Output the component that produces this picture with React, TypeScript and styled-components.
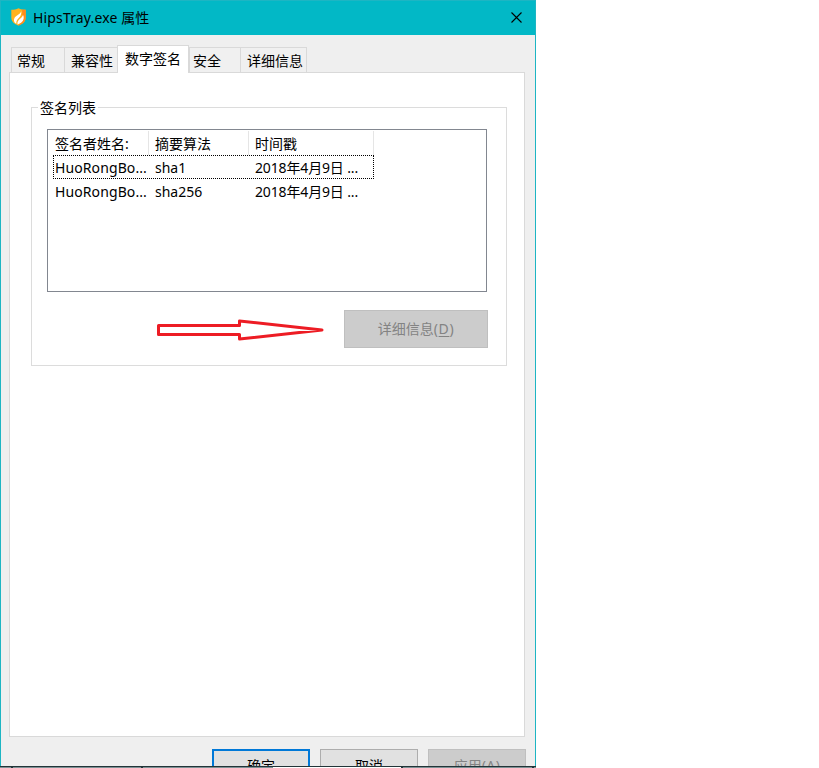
import React from "react";
import styled, { createGlobalStyle } from "styled-components";

const Global = createGlobalStyle`
  * { box-sizing: border-box; }
  html, body { margin: 0; padding: 0; background: #fff; overflow: hidden; }
  body {
    font-family: "Noto Sans", "Noto Sans CJK SC", sans-serif;
    font-size: 14px;
    line-height: 20px;
    color: #000;
    white-space: nowrap;
  }
`;

const Page = styled.div`
  width: 819px;
  height: 768px;
  overflow: hidden;
`;

const Dialog = styled.div`
  width: 536px;
  height: 766px;
  display: flex;
  flex-direction: column;
  background: #efefef;
  border: 1px solid #1db5c3;
  border-bottom: 0;
  overflow: hidden;
`;

const TitleBar = styled.header`
  height: 34px;
  flex: none;
  display: flex;
  align-items: center;
  padding: 0 13px 0 10px;
  background: #02b8c6;
`;

const Title = styled.div`
  flex: 1;
  padding-left: 7px;
`;

const Latin = styled.span<{ $spacing?: number }>`
  letter-spacing: ${(p) => p.$spacing ?? 0}px;
`;

const TabStrip = styled.nav`
  height: 37px;
  flex: none;
  display: flex;
  align-items: flex-end;
  padding-left: 10px;
`;

const Tab = styled.div<{ $width: number; $inset: number; $active?: boolean }>`
  width: ${(p) => p.$width}px;
  height: ${(p) => (p.$active ? 28 : 25)}px;
  margin-bottom: ${(p) => (p.$active ? -1 : 0)}px;
  padding: 3px 0 0 ${(p) => p.$inset}px;
  border: 1px solid #d9d9d9;
  border-width: ${(p) => (p.$active ? "1px 1px 0 1px" : "1px 0 0 1px")};
  background: ${(p) => (p.$active ? "#fff" : "#f0f0f0")};
  position: relative;
  z-index: ${(p) => (p.$active ? 1 : 0)};

  &:last-child { border-right-width: 1px; }
`;

const Sheet = styled.main`
  width: 516px;
  height: 665px;
  flex: none;
  margin-left: 8px;
  padding: 34px 17px 0 21px;
  border: 1px solid #d9d9d9;
  background: #fff;
`;

const Group = styled.section`
  height: 259px;
  border: 1px solid #dcdcdc;
`;

const Legend = styled.div`
  width: 60px;
  height: 20px;
  margin: -10px 0 0 6px;
  padding-left: 2px;
  background: #fff;
`;

const SignatureList = styled.div`
  width: 440px;
  height: 163px;
  margin: 11px 0 0 15px;
  padding: 1px 0 0 5px;
  border: 1px solid #828790;
`;

const HeaderRow = styled.div`
  display: grid;
  grid-template-columns: 96px 100px 125px;
  height: 24px;
`;

const HeaderCell = styled.div`
  padding: 3px 0 0 6px;
  border-right: 1px solid #e5e5e5;
  &:first-child { padding-left: 2px; }
`;

const Row = styled.div<{ $focused?: boolean }>`
  width: 321px;
  height: 24px;
  display: grid;
  grid-template-columns: 100px 100px 1fr;
  padding: ${(p) => (p.$focused ? "2px 1px 0" : "3px 2px 0")};
  border: ${(p) => (p.$focused ? "1px dotted #000" : "0")};
`;

const ActionRow = styled.div`
  height: 38px;
  margin: 18px 18px 0 125px;
  display: flex;
  justify-content: space-between;
`;

const Button = styled.button<{ $width: number; $kind?: "default" | "disabled" }>`
  width: ${(p) => p.$width}px;
  height: 38px;
  flex: none;
  padding: 0;
  font: inherit;
  color: ${(p) => (p.$kind === "disabled" ? "#838383" : "#000")};
  background: ${(p) => (p.$kind === "disabled" ? "#ccc" : "#e1e1e1")};
  border: ${(p) =>
    p.$kind === "default" ? "2px solid #0078d7" : p.$kind === "disabled" ? "1px solid #bfbfbf" : "1px solid #adadad"};
  display: flex;
  justify-content: center;
  align-items: center;
`;

const Key = styled.span`
  text-decoration: underline;
  text-underline-offset: 2px;
  text-decoration-thickness: 1px;
`;

const Footer = styled.footer`
  height: 38px;
  flex: none;
  display: flex;
  justify-content: flex-end;
  gap: 10px;
  margin: 12px 9px 0 0;

  ${Button} { height: 34px; }
`;

const Edge = styled.div`
  height: 2px;
  width: 536px;
  border-top: 1px solid #223438;
  display: grid;
  grid-template-columns: 11px 2px 128px 2px 130px 128px 2px 129px 2px 2px;
  background: #7d9194;
`;

const Segment = styled.i<{ $color: string }>`
  background: ${(p) => p.$color};
`;

const edgeColors = ["#7d9194", "#223438", "#7d9194", "#223438", "#7d9194", "#fff", "#223438", "#7d9194", "#223438", "#7d9194"];

const signatures = [
  { signer: "HuoRongBo...", digest: "sha1", date: "2018年4月9日 ..." },
  { signer: "HuoRongBo...", digest: "sha256", date: "2018年4月9日 ..." },
];

const ShieldIcon = styled.svg`
  display: block;
  margin-top: -2px;
`;

const Shield = () => (
  <ShieldIcon width="15" height="18" viewBox="0 0 15 18">
    <path d="M7.5 .3C9.6 1.5 12 1.8 14.7 1.8V9.5C14.7 13.7 11.5 16.3 7.5 17.6C3.5 16.3.3 13.7.3 9.5V1.8C3 1.8 5.4 1.5 7.5.3Z" fill="#ffb21c" />
    <path d="M14.7 1.8V9.5C14.7 13.7 11.5 16.3 7.5 17.6L7 17.4C11 14 12 9 11 1.5Z" fill="#ff8a1c" />
    <path d="M10.3 3.2C10.4 5.5 10 7.6 8.4 9.2C6.8 10.8 5.3 12.2 5.2 15.8C2.9 14.4 2.4 12 3.4 10.2C4.7 7.7 8.9 6.5 10.3 3.2Z" fill="#fff" />
    <path d="M12 6.7C13.4 9.3 12.8 12.2 10.6 14.3C9.5 15.3 8 16.2 6.5 16.5C6 13.7 7.5 12.1 9.3 10.6C10.7 9.4 11.7 8.3 12 6.7Z" fill="#fff" />
  </ShieldIcon>
);

const CloseIcon = styled.svg`
  display: block;
  margin-top: -1px;
`;

const Close = () => (
  <CloseIcon width="11" height="11" viewBox="0 0 11 11">
    <path d="M.5 .5L10.5 10.5M10.5 .5L.5 10.5" stroke="#000" strokeWidth="1.1" />
  </CloseIcon>
);

const Arrow = styled.svg`
  display: block;
  width: 168px;
  height: 40px;
`;

export default function App() {
  return (
    <Page>
      <Global />
      <Dialog>
        <TitleBar>
          <Shield />
          <Title><Latin $spacing={0.15}>HipsTray.exe </Latin>属性</Title>
          <Close />
        </TitleBar>
        <TabStrip>
          <Tab $width={53} $inset={5}>常规</Tab>
          <Tab $width={53} $inset={6}>兼容性</Tab>
          <Tab $width={72} $inset={7} $active>数字签名</Tab>
          <Tab $width={51} $inset={3}>安全</Tab>
          <Tab $width={67} $inset={6}>详细信息</Tab>
        </TabStrip>
        <Sheet>
          <Group>
            <Legend>签名列表</Legend>
            <SignatureList>
              <HeaderRow>
                <HeaderCell>签名者姓名:</HeaderCell>
                <HeaderCell>摘要算法</HeaderCell>
                <HeaderCell>时间戳</HeaderCell>
              </HeaderRow>
              {signatures.map((s, i) => (
                <Row key={s.digest} $focused={i === 0}>
                  <Latin $spacing={0.1}>{s.signer}</Latin>
                  <Latin>{s.digest}</Latin>
                  <Latin $spacing={-0.15}>{s.date}</Latin>
                </Row>
              ))}
            </SignatureList>
            <ActionRow>
              <Arrow viewBox="0 0 168 40">
                <path d="M1.5 15.5V24.5H82.5V29L165 20L82.5 11V15.5Z" fill="none" stroke="#ed1c24" strokeWidth="3" strokeLinejoin="round" />
              </Arrow>
              <Button $width={144} $kind="disabled">详细信息<Latin $spacing={0.6}>(<Key>D</Key>)</Latin></Button>
            </ActionRow>
          </Group>
        </Sheet>
        <Footer>
          <Button $width={98} $kind="default">确定</Button>
          <Button $width={98}>取消</Button>
          <Button $width={98} $kind="disabled">应用<Latin $spacing={0.4}>(<Key>A</Key>)</Latin></Button>
        </Footer>
      </Dialog>
      <Edge>{edgeColors.map((c, i) => <Segment key={i} $color={c} />)}</Edge>
    </Page>
  );
}
